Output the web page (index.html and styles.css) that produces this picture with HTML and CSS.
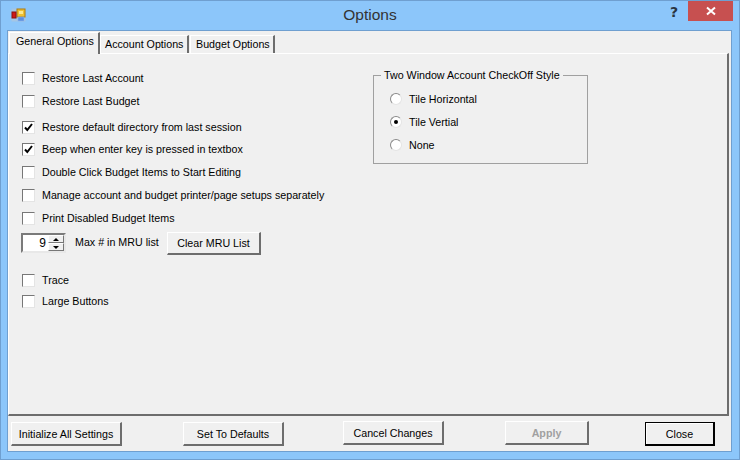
FILE: index.html
```html
<!DOCTYPE html>
<html lang="en">
<head>
<meta charset="utf-8">
<title>Options</title>
<link rel="stylesheet" href="styles.css">
</head>
<body>
<div class="window">
  <header class="titlebar">
    <svg class="app-icon" width="16" height="16" viewBox="0 0 16 16">
      <rect x="0.5" y="0.5" width="14" height="13" fill="#b9c7d2" opacity=".55"/>
      <rect x="6" y="1" width="8" height="8" fill="#f0c030" stroke="#a87a10"/>
      <rect x="8" y="3" width="4" height="3" fill="#fbe890"/>
      <rect x="1" y="4" width="4" height="6" fill="#d01818" stroke="#8a1010"/>
      <rect x="7" y="9" width="6" height="4" fill="#5c8fe0" stroke="#90b4e8" stroke-width=".6"/>
    </svg>
    <div class="title">Options</div>
    <div class="help">?</div>
    <div class="close-x">
      <svg width="10" height="10" viewBox="0 0 10 10"><path d="M1 1.5 L9 8.5 M9 1.5 L1 8.5" stroke="#fff" stroke-width="2"/></svg>
    </div>
  </header>
  <main class="client">
    <nav class="tabs">
      <div class="tab active">General Options</div>
      <div class="tab">Account Options</div>
      <div class="tab">Budget Options</div>
    </nav>
    <section class="page">
      <div class="left">
        <label class="check"><span class="box"></span>Restore Last Account</label>
        <label class="check g1"><span class="box"></span>Restore Last Budget</label>
        <label class="check g2"><span class="box"><svg width="9" height="9" viewBox="0 0 9 9"><path d="M1 4.5 L3.3 7 L8 1" fill="none" stroke="#000" stroke-width="2"/></svg></span>Restore default directory from last session</label>
        <label class="check g3"><span class="box"><svg width="9" height="9" viewBox="0 0 9 9"><path d="M1 4.5 L3.3 7 L8 1" fill="none" stroke="#000" stroke-width="2"/></svg></span>Beep when enter key is pressed in textbox</label>
        <label class="check g1"><span class="box"></span>Double Click Budget Items to Start Editing</label>
        <label class="check g1"><span class="box"></span>Manage account and budget printer/page setups separately</label>
        <label class="check g1"><span class="box"></span>Print Disabled Budget Items</label>
        <div class="mru">
          <div class="spin">
            <span class="spin-val">9</span>
            <span class="spin-btns">
              <span class="spin-btn"><i class="up"></i></span>
              <span class="spin-btn"><i class="down"></i></span>
            </span>
          </div>
          <span class="mru-label">Max # in MRU list</span>
          <button class="btn clear">Clear MRU List</button>
        </div>
        <label class="check g4"><span class="box"></span>Trace</label>
        <label class="check g5"><span class="box"></span>Large Buttons</label>
      </div>
      <fieldset class="group">
        <legend>Two Window Account CheckOff Style</legend>
        <label class="radio"><span class="dot"></span>Tile Horizontal</label>
        <label class="radio"><span class="dot on"></span>Tile Vertial</label>
        <label class="radio"><span class="dot"></span>None</label>
      </fieldset>
    </section>
    <footer class="actions">
      <button class="btn init">Initialize All Settings</button>
      <button class="btn defaults">Set To Defaults</button>
      <button class="btn cancel">Cancel Changes</button>
      <button class="btn apply" disabled>Apply</button>
      <button class="btn closebtn">Close</button>
    </footer>
  </main>
</div>
</body>
</html>
```
FILE: styles.css
```css
* { box-sizing: border-box; }
html, body { margin: 0; padding: 0; }
body {
  width: 740px; height: 460px; overflow: hidden;
  font-family: "Liberation Sans", Arial, sans-serif;
  font-size: 10.7px; color: #000;
}
.window {
  width: 740px; height: 460px;
  background: #8cc6fa;
  border: 1px solid #6f9fd0;
  padding: 0 7px 7px 6px;
  display: flex; flex-direction: column;
}
.titlebar {
  height: 29px; flex: none;
  display: flex; align-items: center;
  position: relative;
}
.app-icon { position: absolute; left: 4px; top: 7px; }
.title {
  flex: 1; text-align: center;
  font-size: 15.5px; color: #333; padding: 0 0 1px 1px;
}
.help {
  position: absolute; right: 54px; top: 1px;
  font: bold 14px/20px "DejaVu Sans", sans-serif; color: #2a3540;
}
.close-x {
  position: absolute; right: -1px; top: 0;
  width: 45px; height: 20px; background: #c75050;
  display: flex; align-items: center; justify-content: center;
}
.client {
  flex: 1; background: #f0f0f0;
  border: 1px solid #6f9fd0;
  padding: 1px 2px 0 0;
  display: flex; flex-direction: column;
  min-height: 0;
}
.tabs { display: flex; height: 21px; flex: none; padding-left: 1px; position: relative; z-index: 1; }
.tab {
  height: 18px; margin-top: 3px; padding: 1px 0 0 4px;
  background: #f0f0f0;
  border: 1px solid #fff; border-bottom: 0;
  border-right: 2px solid #6d6d6d;
  white-space: nowrap; line-height: 14px;
  margin-right: 1px;
}
.tab.active { height: 22px; margin-top: 0; padding: 1px 0 0 6px; width: 91px; margin-right: 0; }
.tab:nth-child(2) { width: 89px; }
.tab:nth-child(3) { width: 85px; padding-left: 5px; }
.page {
  flex: none; height: 363px;
  border: 1px solid #fff;
  border-right: 2px solid #6d6d6d;
  border-bottom: 2px solid #6d6d6d;
  display: flex;
  padding: 17px 0 0 13px;
}
.left { width: 350px; flex: none; display: flex; flex-direction: column; }
.check { display: flex; align-items: center; height: 14px; white-space: nowrap; }
.box {
  width: 13px; height: 13px; flex: none; margin-right: 7px;
  background: #fff; border: 1px solid #777;
  border-right-color: #e4e4e4; border-bottom-color: #e4e4e4;
  display: flex; align-items: center; justify-content: center;
}
.g1 { margin-top: 9px; }
.g2 { margin-top: 12px; }
.g3 { margin-top: 8px; }
.g4 { margin-top: 17px; }
.g5 { margin-top: 7px; }
.mru { display: flex; align-items: center; height: 25px; margin-top: 6px; margin-left: -1px; }
.spin {
  width: 45px; height: 20px; flex: none; display: flex;
  background: #fff; border: 2px solid #7a7a7a;
  border-right-color: #e8e8e8; border-bottom-color: #e8e8e8;
  margin-top: -1px;
}
.spin-val { flex: 1; text-align: right; font-size: 12px; line-height: 17px; padding-right: 2px; }
.spin-btns { width: 16px; display: flex; flex-direction: column; }
.spin-btn {
  flex: 1; background: #f0f0f0;
  border: 1px solid #fff; border-right-color: #777; border-bottom-color: #777;
  display: flex; align-items: center; justify-content: center;
}
.up { border: 3px solid transparent; border-bottom-color: #000; border-top: 0; }
.down { border: 3px solid transparent; border-top-color: #000; border-bottom: 0; }
.mru-label { margin-left: 9px; margin-top: -3px; width: 92px; flex: none; white-space: nowrap; }
.btn {
  font: inherit; color: #000; background: #f0f0f0;
  border: 1px solid #fff; border-right: 2px solid #6d6d6d; border-bottom: 2px solid #6d6d6d;
  padding: 0; height: 24px; white-space: nowrap;
}
.clear { width: 94px; height: 23px; margin-top: -1px; }
.group {
  margin: -3px 0 0 1px; padding: 0 0 0 16px;
  width: 215px; height: 96px;
  border: 1px solid #a0a0a0;
}
.group legend { padding: 0 3px; margin-left: -9px; line-height: 14px; white-space: nowrap; }
.radio { display: flex; align-items: center; height: 14px; margin-top: 9px; white-space: nowrap; }
.radio:first-of-type { margin-top: 10px; }
.dot {
  width: 12px; height: 12px; border-radius: 50%; flex: none;
  background: #fff; margin-right: 7px;
  border: 1px solid #8a8a8a; border-right-color: #e4e4e4; border-bottom-color: #e4e4e4;
  display: flex; align-items: center; justify-content: center;
}
.dot.on::after { content: ""; width: 4px; height: 4px; border-radius: 50%; background: #000; }
.actions { flex: 1; display: flex; align-items: flex-start; padding: 6px 0 0 3px; }
.init { width: 111px; }
.defaults { width: 101px; margin-left: 61px; }
.cancel { width: 101px; margin-left: 59px; margin-top: -1px; }
.apply { width: 84px; margin-left: 61px; color: #a0a0a0; font-weight: bold; margin-top: -1px; }
.closebtn { width: 70px; margin-left: 56px; border: 1px solid #000; border-right-width: 2px; border-bottom-width: 2px; box-shadow: inset 1px 1px 0 #fff; }
```
